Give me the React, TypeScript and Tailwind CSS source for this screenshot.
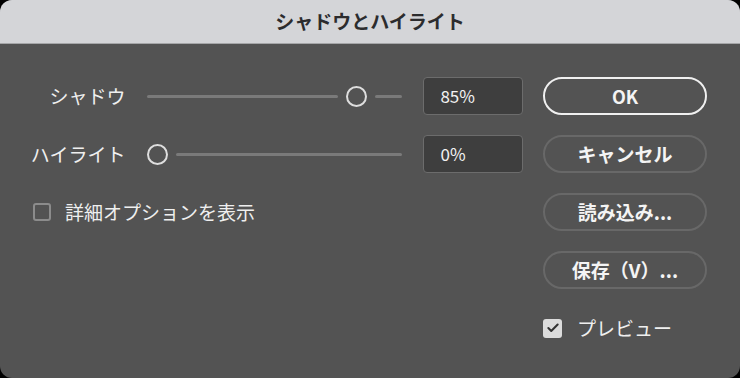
import { Check } from "lucide-react";

const FONT = "font-['Noto_Sans_CJK_JP','Noto_Sans',sans-serif]";

function Slider({ value }: { value: number }) {
  const left = Math.round(value * 2.25);
  return (
    <div className="flex items-center w-[255px] h-[38px]">
      {left > 0 && (
        <div className="h-[3px] rounded-full bg-[#7a7a7a] mr-[8px]" style={{ width: left }} />
      )}
      <div className="size-[21px] shrink-0 rounded-full border-2 border-[#dedede]" />
      <div className="h-[3px] flex-1 rounded-full bg-[#7a7a7a] ml-[8px]" />
    </div>
  );
}

function Row({ label, value }: { label: string; value: number }) {
  return (
    <div className="flex items-center h-[38px]">
      <div className="w-[106px] text-right text-[19px] text-[#efefef]">{label}</div>
      <div className="ml-[22px]">
        <Slider value={value} />
      </div>
      <div className="ml-[21px] w-[100px] h-[38px] rounded-[4px] border border-[#6c6c6c] bg-[#3e3e3e] flex items-center pl-[16px] text-[17px] text-[#f2f2f2]">
        {value}%
      </div>
    </div>
  );
}

function Button({ children, primary }: { children: React.ReactNode; primary?: boolean }) {
  return (
    <button
      className={
        primary
          ? "h-[38px] w-full rounded-full border-2 border-[#f0f0f0] text-[18px] font-bold text-[#f4f4f4]"
          : "h-[38px] w-full rounded-full border-2 border-[#686868] text-[19px] font-bold text-[#f4f4f4]"
      }
    >
      {children}
    </button>
  );
}

export default function App() {
  return (
    <div className={`w-[740px] h-[378px] bg-black ${FONT}`}>
      <div className="h-full rounded-[12px] overflow-hidden bg-[#535353] flex flex-col">
        <div className="h-[44px] shrink-0 bg-[#d4d5d8] border-b border-[#a5a6a8] flex items-center justify-center text-[19px] font-bold text-[#2c2c2e]">
          シャドウとハイライト
        </div>
        <div className="flex pt-[33px] pl-[20px]">
          <div className="flex flex-col gap-[20px] w-[503px]">
            <Row label="シャドウ" value={85} />
            <Row label="ハイライト" value={0} />
            <div className="flex items-center h-[38px] pl-[13px]">
              <div className="size-[18px] rounded-[3px] border-2 border-[#8c8c8c]" />
              <span className="ml-[14px] text-[19px] text-[#efefef]">詳細オプションを表示</span>
            </div>
          </div>
          <div className="ml-[20px] w-[164px] flex flex-col gap-[20px]">
            <Button primary>OK</Button>
            <Button>キャンセル</Button>
            <Button>読み込み...</Button>
            <Button>保存（V）...</Button>
            <div className="flex items-center mt-[5px]">
              <div className="size-[19px] rounded-[3px] bg-[#dcdcdc] flex items-center justify-center">
                <Check className="size-[14px] text-[#333333]" strokeWidth={3.5} />
              </div>
              <span className="ml-[15px] text-[19px] text-[#efefef]">プレビュー</span>
            </div>
          </div>
        </div>
      </div>
    </div>
  );
}
